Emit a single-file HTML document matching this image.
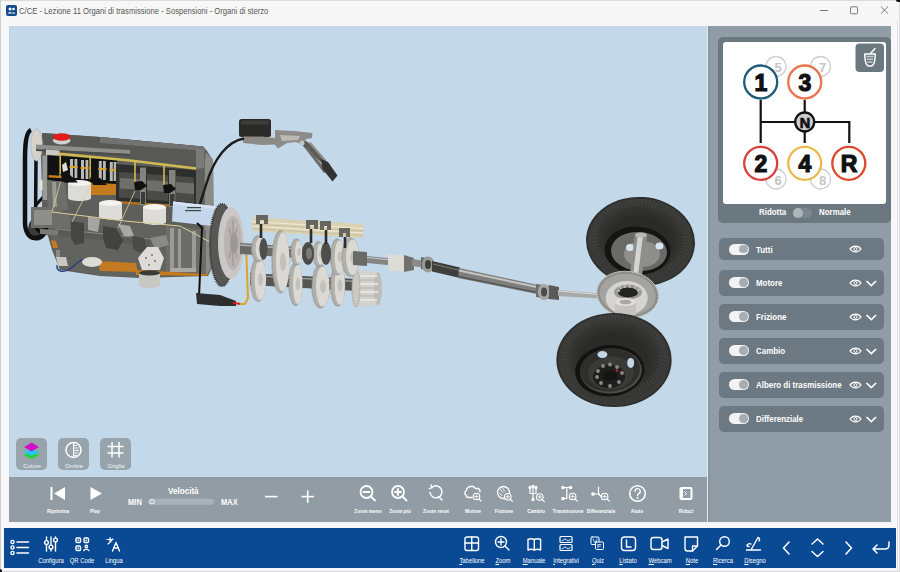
<!DOCTYPE html>
<html><head><meta charset="utf-8">
<style>
*{margin:0;padding:0;box-sizing:border-box}
html,body{width:900px;height:572px;overflow:hidden;background:#f7f7fa;font-family:"Liberation Sans",sans-serif}
.a{position:absolute}
#title{left:0;top:0;width:900px;height:20px;background:#f7f7f7;border-top:1px solid #dcdcdc}
#ttxt{left:19px;top:5.8px;font-size:8.7px;color:#555;white-space:nowrap;transform:scaleX(0.88);transform-origin:0 50%}
#view{left:9px;top:26px;width:698px;height:451px;background:#c3d8e9;border-left:1.5px solid #bdd2e4}
#ctrl{left:9px;top:477px;width:698px;height:45px;background:#919ca4}
#panel{left:707px;top:26px;width:184px;height:495.5px;background:#919da6;border-left:1px solid #e2ebf2;box-shadow:inset 3px 0 2px -1px #8a959d}
#bbar{left:4px;top:528px;width:892px;height:39.5px;background:#0a4a95}
.card{background:#6c7880;border-radius:5px}
.row{left:719px;width:165px;height:26px;background:#6d7982;border-radius:5px}
.tog{left:9.5px;top:8px;width:20.5px;height:11px;border-radius:5.5px;background:#f2f2f2}
.tog:after{content:"";position:absolute;right:1.2px;top:1.2px;width:8.6px;height:8.6px;border-radius:4.3px;background:#a6aeb4}
.rl{left:37px;top:7px;font-size:9.8px;font-weight:bold;color:#fff;white-space:nowrap;transform:scaleX(0.81);transform-origin:0 50%}
.lbl{font-size:5.6px;font-weight:bold;color:#fff;white-space:nowrap;transform:translateX(-50%) scaleX(0.86)}
.blbl{font-size:6.6px;color:#fff;white-space:nowrap;transform:translateX(-50%);text-decoration:underline;text-underline-offset:1px}
.btn{top:438px;width:31px;height:32px;border-radius:5px;background:#98a4ac}
</style></head><body>
<div id="title" class="a"></div>

<div id="ttxt" class="a">C/CE - Lezione 11 Organi di trasmissione - Sospensioni - Organi di sterzo</div>

<div id="view" class="a"></div>
<!--SCENE-->
<svg class="a" id="scene" style="left:9px;top:26px" width="698" height="451" viewBox="9 26 698 451">
<defs>
 <radialGradient id="tire" cx="50%" cy="50%" r="50%"><stop offset="0.55" stop-color="#2a2a28"/><stop offset="0.8" stop-color="#353533"/><stop offset="0.95" stop-color="#3a3a38"/><stop offset="1" stop-color="#262624"/></radialGradient>
 <linearGradient id="shaft" x1="0" y1="0" x2="0" y2="1"><stop offset="0" stop-color="#d0d0d0"/><stop offset="0.5" stop-color="#8a8a8a"/><stop offset="1" stop-color="#5a5a5a"/></linearGradient>
 <linearGradient id="gear" x1="0" y1="0" x2="1" y2="0"><stop offset="0" stop-color="#f0efea"/><stop offset="1" stop-color="#b8b8b4"/></linearGradient>
</defs>
<!-- ===== pedal + ECU ===== -->
<rect x="239" y="119" width="32" height="18" rx="2.5" fill="#2a2a29"/>
<rect x="241" y="120.5" width="28" height="4" rx="1" fill="#3c3c3b"/>
<path d="M243 136.5L262 136.5L275 138L276 144.5L262 145L243 143Z" fill="#8c8a86"/>
<path d="M275 130L294 131L312.5 133L312 138L306 139L305 145.5L296 142L287 143L278 148.5L275 145Z" fill="#8e8c88"/>
<path d="M280 135L300 136L298 140L282 141Z" fill="#bcbab5"/>
<path d="M302 141L307 141.5L328 163L325 166L303 146Z" fill="#5e5c59"/><path d="M304 147L308 148L327 171L324 173Z" fill="#6e6c68"/><path d="M308 142L311 142.5L326 160L324 161Z" fill="#8e8c88"/>
<path d="M321 159L328 162L337.5 175.5L332.5 181.5L322.5 169Z" fill="#333332"/>
<circle cx="302" cy="143" r="2.5" fill="#c8c6c2"/>
<!-- ===== engine block ===== -->
<path d="M42 133L100 137L203 146.5L207 151L213 160L214 264L208 276L140 278L100 276L60 270L52 250L48 236L44 232L42 207L42 195L41 155Z" fill="#5e5e5b"/>
<!-- ===== belt ===== -->
<ellipse cx="37" cy="229" rx="9" ry="11.5" fill="#3a3a39"/>
<path d="M31 130C26 132 25 145 25 160L25 222C25 232 29 238 35 238C42 238 46 233 46 228" fill="none" stroke="#101010" stroke-width="4.5"/>
<path d="M36 160L35.5 222C35.5 230 40 234 45 230" fill="none" stroke="#101010" stroke-width="3.5"/><path d="M36 205L45 195" fill="none" stroke="#101010" stroke-width="3"/>
<ellipse cx="36.7" cy="145" rx="5.8" ry="16" fill="#d6d2ca"/>
<ellipse cx="36.7" cy="145" rx="5.8" ry="16" fill="none" stroke="#a8a49c" stroke-width="1" stroke-dasharray="0.7 0.7"/>

<!-- head cover -->
<path d="M42 133L100 137L203 146.5L207 151L206 158L195 167L100 158L45 154Z" fill="#585854"/>
<path d="M100 137L203 146.5L207 151L100 143Z" fill="#727270"/>
<ellipse cx="61.7" cy="140.5" rx="8.8" ry="4" fill="#cdd0d0"/>
<ellipse cx="61.7" cy="137" rx="8.8" ry="3.8" fill="#e01c1c"/>
<!-- right face -->
<path d="M206 152L213 160L214 264L207 275L204 268L205 160Z" fill="#8a8a86"/>
<!-- camshaft rail -->
<path d="M36 144.5L130 150L130 154L36 149Z" fill="#8e8e8a"/>
<path d="M36 149L130 154L130 156L36 151Z" fill="#4a4a48"/>
<!-- left box & pulley -->
<path d="M46 149.5L59.6 150.5L59.6 157L46 156.5Z" fill="#cacac6"/>
<ellipse cx="44" cy="185" rx="5" ry="6" fill="#e2e2de"/>
<!-- black opening under head (left) -->
<path d="M47 155L117 160L117 186L92 186L65 182L47 180Z" fill="#121212"/>
<path d="M42.4 155.6L47.3 155.6L47.3 200L42.4 200Z" fill="#9a9a96"/>
<g fill="#b9b9b5"><rect x="70" y="159" width="3" height="19"/><rect x="74.5" y="159" width="2.8" height="19"/><rect x="81" y="160" width="3" height="19"/><rect x="85.5" y="160" width="2.8" height="19"/><rect x="98.8" y="161" width="3" height="19"/><rect x="103" y="161" width="2.8" height="19"/><rect x="109.8" y="162" width="3" height="19"/><rect x="113.7" y="162" width="2.8" height="19"/></g>
<g fill="#d9a52c"><rect x="69.5" y="166" width="8" height="2"/><rect x="80.5" y="167" width="8" height="2"/><rect x="98.5" y="168" width="8" height="2"/><rect x="109.5" y="169" width="8" height="2"/></g>
<path d="M62 165L66 162L68 170L63 172Z" fill="#dcdcd8"/>
<!-- left vertical columns -->
<path d="M47 180L65 182L68 210L50 212L47 200Z" fill="#6e6e6b"/>
<path d="M52 182L56 182L57 208L53 208Z" fill="#9a9a96"/>
<!-- orange pieces -->
<path d="M48.6 175L64.5 176L64.5 178.3L48.6 177.5Z" fill="#c47a1e"/>
<path d="M89 182.5L117 184L117 195L89 195Z" fill="#c47a1e"/>
<!-- cylinders right (dark) -->
<path d="M116 164L196 170L196 206L116 201Z" fill="#2e2e2c"/>
<path d="M119 172L143 173.5L143 199L119 197.5Z" fill="#4a4a48"/><path d="M120 178L143 179.5L143 190L120 188.5Z" fill="#6e6e6a"/>
<path d="M147 174L168 175.5L168 201L147 199.5Z" fill="#4a4a48"/><path d="M147 180L168 181.5L168 192L147 190.5Z" fill="#6e6e6a"/>
<path d="M176 176L194 177.5L194 203L176 201.5Z" fill="#4a4a48"/><path d="M176 182L194 183.5L194 194L176 192.5Z" fill="#6e6e6a"/>
<path d="M116 201L196 206L196 208L116 203.5Z" fill="#b06d20"/>
<g fill="#8c8c88" opacity="0.9"><rect x="140" y="167.5" width="6" height="38"/><rect x="169" y="170" width="6.5" height="37"/></g>
<g fill="#3a3a38"><rect x="141" y="192" width="4" height="12"/><rect x="170" y="194" width="4.5" height="12"/></g>
<path d="M196 148L204.4 150L204.4 168L196 169Z" fill="#7a7a76"/>
<!-- fuel rail yellow -->
<path d="M59 153.8L130 160.5L196 168.5" fill="none" stroke="#d0bb52" stroke-width="2.6"/>
<path d="M60.2 153.8V176.4M90.2 156.6V179M135 161.5V184M164 164.5V187" fill="none" stroke="#d0bb52" stroke-width="1.6"/>
<!-- pistons -->
<path d="M68 183L91 183L91 198C91 202 68 202 68 198Z" fill="#dcdbd6"/>
<ellipse cx="79.5" cy="183" rx="11.5" ry="3" fill="#f2f2ef"/>
<path d="M99 203L122 203L122 218C122 222 99 222 99 218Z" fill="#dddcd7"/>
<ellipse cx="110.5" cy="203" rx="11.5" ry="3" fill="#f2f2ef"/>
<path d="M143 207L166 207L166 222C166 226 143 226 143 222Z" fill="#dddcd7"/>
<ellipse cx="154.5" cy="207" rx="11.5" ry="3" fill="#f2f2ef"/>
<!-- injectors -->
<g fill="#111"><path d="M60 174L70 175L78 182.5L64 182.5Z"/><path d="M90 177.6L100 178L107 185L93 185Z"/><path d="M134 182L142 181L147 186L141 190L135 190Z"/><path d="M163 185L171 184L176 189L170 193L164 193Z"/></g>
<!-- crankshaft -->
<path d="M47 212L130 222L175 228L205 232L206 272L140 277L100 275L60 269L52 243Z" fill="#62625f"/>
<path d="M166 225L206 230L206 273L166 272Z" fill="#6c6c69"/>
<g fill="#9a9a96"><rect x="170" y="228" width="4" height="44"/><rect x="178" y="229" width="3" height="43"/><rect x="192" y="231" width="4" height="41"/></g>
<path d="M170 268L196 268L196 272L170 272Z" fill="#a8a8a4"/>
<path d="M31 207L58 207L62 214L70 214L70 233L58 233L55 228L31 228Z" fill="#6d6d6a"/>
<path d="M34 210L52 210L52 225L34 225Z" fill="#8e8e8a"/>
<path d="M40 229L72 231L72 236L40 234Z" fill="#7a7a77"/>
<path d="M58 228L100 231L130 236L150 238L150 246L128 244L100 240L58 236Z" fill="#5a5a57"/>
<path d="M58 229L150 239" stroke="#8a8a86" stroke-width="1.2"/>
<path d="M71 221L84 223L84 243L75 245L71 238Z" fill="#454543"/>
<path d="M88 216L100 219L98 232L88 230Z" fill="#a5a5a1"/>
<path d="M103 226L116 228L123 240L118 250L106 248L103 238Z" fill="#42423f"/>
<path d="M118 224L130 226L134 236L124 236Z" fill="#a8a8a4"/>
<path d="M132 236L144 238L147 249L140 253L133 249Z" fill="#4a4a48"/>
<path d="M150 238L166 235L169 245L155 249Z" fill="#8a8a86"/>
<path d="M52 212L125 221L180 226L212 243" fill="none" stroke="#d9d19c" stroke-width="1"/>
<path d="M60.5 182L52 212M90 186L72 222M135 191L118 228" stroke="#d9d19c" stroke-width="0.8"/>
<!-- orange bottom -->
<path d="M51 240L56 241L58 248L53 248Z" fill="#c47a1e"/>
<path d="M98 261L136 263L138 272L100 271Z" fill="#c47a1e"/>
<path d="M136 270L208 274L206 276L136 275Z" fill="#c47a1e"/>
<!-- distributor -->
<path d="M138 258L147 247L158 247L164 258L160 270L142 270Z" fill="#dedcd8"/>
<g fill="#6a6a68"><circle cx="146" cy="258" r="0.9"/><circle cx="152" cy="255" r="0.9"/><circle cx="155" cy="261" r="0.9"/><circle cx="149" cy="265" r="0.9"/></g>
<path d="M139 273L160 273L160 285C160 289 139 289 139 285Z" fill="#c8c7c2"/>
<ellipse cx="149.5" cy="273" rx="10.5" ry="2.5" fill="#3a3a38"/>
<!-- small parts bottom-left -->
<path d="M56 250L60 250L60 258L56 258Z" fill="#8a8a86"/>
<path d="M56 257L66 257L68 266L58 266Z" fill="#c8c7c2"/>
<path d="M57 265C56 272 64 273 70 269C74 266 78 261 84 259" fill="none" stroke="#1f3b80" stroke-width="1.3"/>
<ellipse cx="92" cy="262" rx="10" ry="5" fill="#dcdbd6"/>
<path d="M244 138.5C228 141 214 158 206 185C203 195 201 200 200 204" fill="none" stroke="#1c1c1c" stroke-width="2.4"/>
<!-- blue ECU -->
<path d="M173 201.5L218 206.5L216 226.5L172 221.5Z" fill="#c3d6ec"/>
<path d="M173 201.5L218 206.5L218 209L173 204Z" fill="#d8e6f4"/>
<g fill="#444"><rect x="187" y="207" width="14" height="1.2"/><rect x="185" y="210" width="16" height="1.2"/></g>
<!-- cable from ECU down -->
<path d="M197 223L202 228L199 297" fill="none" stroke="#111" stroke-width="2"/>
<path d="M196 293L220 295L236 301L236 306L220 306L197 304Z" fill="#2e2e2e"/>
<path d="M233 303L241 304" stroke="#d82020" stroke-width="2.2"/>
<!-- ===== flywheel / clutch ===== -->
<ellipse cx="222" cy="245" rx="12" ry="41" fill="#575755"/>
<ellipse cx="222" cy="245" rx="12" ry="41" fill="none" stroke="#3a3a38" stroke-width="2.2" stroke-dasharray="1.2 0.8"/>
<ellipse cx="231" cy="243" rx="13" ry="36" fill="#cbc7c6"/>
<ellipse cx="233" cy="243" rx="9" ry="27" fill="#b9b3b3"/>
<path d="M233 220L233 266M229 228L237 258M237 228L229 258" stroke="#8a8686" stroke-width="0.8"/>
<ellipse cx="234" cy="243" rx="4" ry="10" fill="#9c9898"/>
<path d="M240 243.5L246 246L248 298L245 304L240 304" fill="none" stroke="#d9a52c" stroke-width="2"/>
<!-- ===== gearbox ===== -->
<path d="M240 243L356 251L356 262L240 254Z" fill="#6a6a68"/><path d="M240 245L356 253" stroke="#b5b5b2" stroke-width="1.5"/>
<path d="M250 273L357 279L357 291L250 285Z" fill="#545452"/><path d="M250 275.5L357 281.5" stroke="#9a9a98" stroke-width="1.5"/>
<path d="M252 217L363 224L363 238L252 231Z" fill="#d9d1b2"/>
<path d="M252 221.5L363 228.5" stroke="#f2ecd6" stroke-width="1"/><path d="M252 226L363 233" stroke="#f2ecd6" stroke-width="1"/><path d="M252 224L363 231M252 228.5L363 235.5" stroke="#bdb596" stroke-width="0.6"/>
<ellipse cx="258.1" cy="279.6" rx="7.5" ry="21.7" fill="#b1b0aa" stroke="#8f8e89" stroke-width="1.4" stroke-dasharray="0.6 0.6"/><ellipse cx="260.3" cy="279.6" rx="5.7" ry="20.2" fill="#dad9d3"/><ellipse cx="260.6" cy="279.6" rx="2.6" ry="6.5" fill="#c2c1bb"/>
<ellipse cx="295.5" cy="284.2" rx="6.5" ry="21.2" fill="#b1b0aa" stroke="#8f8e89" stroke-width="1.4" stroke-dasharray="0.6 0.6"/><ellipse cx="297.7" cy="284.2" rx="4.7" ry="19.8" fill="#dad9d3"/><ellipse cx="298.0" cy="284.2" rx="2.3" ry="6.4" fill="#c2c1bb"/>
<ellipse cx="320.5" cy="286.5" rx="8.5" ry="21.5" fill="#b1b0aa" stroke="#8f8e89" stroke-width="1.4" stroke-dasharray="0.6 0.6"/><ellipse cx="322.7" cy="286.5" rx="6.7" ry="20.0" fill="#dad9d3"/><ellipse cx="323.0" cy="286.5" rx="3.0" ry="6.5" fill="#c2c1bb"/>
<ellipse cx="337.6" cy="285.5" rx="7.0" ry="20.5" fill="#b1b0aa" stroke="#8f8e89" stroke-width="1.4" stroke-dasharray="0.6 0.6"/><ellipse cx="339.8" cy="285.5" rx="5.2" ry="19.0" fill="#dad9d3"/><ellipse cx="340.1" cy="285.5" rx="2.5" ry="6.1" fill="#c2c1bb"/>
<path d="M356 270L378 272L380 305L356 307Z" fill="#d2d1cb"/><ellipse cx="378" cy="288.5" rx="4" ry="16.5" fill="#bebdb7"/><ellipse cx="356" cy="288.5" rx="4" ry="18" fill="#c9c8c2" stroke="#a09f99" stroke-width="1.2" stroke-dasharray="0.8 0.8"/>
<path d="M360 276H377M360 284H378M360 292H378M360 300H377" stroke="#ecebe6" stroke-width="1.3"/><path d="M360 280H378M360 288H378M360 296H378" stroke="#b0afa9" stroke-width="0.8"/>
<ellipse cx="258.6" cy="248.6" rx="7.1" ry="12.9" fill="#b1b0aa" stroke="#8f8e89" stroke-width="1.4" stroke-dasharray="0.6 0.6"/><ellipse cx="260.8" cy="248.6" rx="5.3" ry="11.4" fill="#dad9d3"/><ellipse cx="261.1" cy="248.6" rx="2.5" ry="3.9" fill="#c2c1bb"/>
<ellipse cx="280.5" cy="261.9" rx="8.5" ry="31.1" fill="#b1b0aa" stroke="#8f8e89" stroke-width="1.4" stroke-dasharray="0.6 0.6"/><ellipse cx="282.7" cy="261.9" rx="6.7" ry="29.6" fill="#dad9d3"/><ellipse cx="283.0" cy="261.9" rx="3.0" ry="9.3" fill="#c2c1bb"/>
<ellipse cx="296.5" cy="252.0" rx="5.5" ry="13.0" fill="#b1b0aa" stroke="#8f8e89" stroke-width="1.4" stroke-dasharray="0.6 0.6"/><ellipse cx="298.7" cy="252.0" rx="3.7" ry="11.5" fill="#dad9d3"/><ellipse cx="299.0" cy="252.0" rx="1.9" ry="3.9" fill="#c2c1bb"/>
<ellipse cx="318.4" cy="254.0" rx="5.3" ry="12.5" fill="#b1b0aa" stroke="#8f8e89" stroke-width="1.4" stroke-dasharray="0.6 0.6"/><ellipse cx="320.6" cy="254.0" rx="3.5" ry="11.0" fill="#dad9d3"/><ellipse cx="320.9" cy="254.0" rx="1.9" ry="3.8" fill="#c2c1bb"/>
<ellipse cx="337.3" cy="257.0" rx="6.7" ry="18.0" fill="#b1b0aa" stroke="#8f8e89" stroke-width="1.4" stroke-dasharray="0.6 0.6"/><ellipse cx="339.5" cy="257.0" rx="4.9" ry="16.5" fill="#dad9d3"/><ellipse cx="339.8" cy="257.0" rx="2.3" ry="5.4" fill="#c2c1bb"/>
<ellipse cx="350.5" cy="257.2" rx="8.5" ry="19.2" fill="#b1b0aa" stroke="#8f8e89" stroke-width="1.4" stroke-dasharray="0.6 0.6"/><ellipse cx="352.7" cy="257.2" rx="6.7" ry="17.7" fill="#dad9d3"/><ellipse cx="353.0" cy="257.2" rx="3.0" ry="5.8" fill="#c2c1bb"/>
<ellipse cx="263.5" cy="249" rx="4" ry="11" fill="#4e4e4c"/><ellipse cx="308" cy="253.5" rx="6" ry="11.5" fill="#4a4a48"/><ellipse cx="309" cy="253.5" rx="3" ry="6" fill="#7a7a78"/><ellipse cx="326" cy="253.5" rx="5" ry="11.5" fill="#4e4e4c"/>
<g fill="#66665f"><path d="M256 215H268V224H264V220H260V224H256Z"/><path d="M306 220H318V229H314V225H310V229H306Z"/><path d="M320 221H331V230H327V226H324V230H320Z"/><path d="M339 228H350V237H346V233H343V237H339Z"/></g>
<g stroke="#2c2c2b" stroke-width="2.6"><path d="M261 224V238M311 229V243M326 230V244M345 237V248"/></g>
<path d="M353 251L367 252L367 266L353 265Z" fill="#6a6a68"/><path d="M367 256L392 258.5L392 265.5L367 263Z" fill="#858583"/><path d="M367 257.5L392 260" stroke="#c8c8c6" stroke-width="1.2"/>
<path d="M388 254L404 255L414 258L414 270L404 272L388 270Z" fill="#dcdbd6"/><path d="M404 255L414 258L414 270L404 272Z" fill="#707070"/>
<!-- ===== drive shaft ===== -->
<path d="M412 259L426 261L426 268L412 266Z" fill="#8a8a88"/>
<path d="M421 257L433 259L434 271L421 269Z" fill="#6a6a68"/>
<ellipse cx="428" cy="264.5" rx="6" ry="8" fill="#9a9a98"/>
<ellipse cx="428" cy="264.5" rx="3" ry="4.5" fill="#3e3e3c"/>
<path d="M432 261L460 267.5L460 278L432 271.5Z" fill="#3e3e3c"/>
<path d="M433 264L460 270.5" stroke="#7a7a78" stroke-width="1"/>
<path d="M459 268L538 285L537 294L458 278Z" fill="#7e7e7c"/>
<path d="M459 270.5L538 287.3" stroke="#c4c4c2" stroke-width="2"/>
<path d="M458 276.5L537 292.5" stroke="#545452" stroke-width="1.4"/>
<path d="M536 284L550 286L550 299L536 297Z" fill="#6e6e6c"/>
<ellipse cx="544" cy="292" rx="6" ry="8" fill="#a6a6a4"/>
<ellipse cx="544" cy="292" rx="3" ry="4.5" fill="#4a4a48"/>
<path d="M549 285L559 287L559 300L549 299Z" fill="#5a5a58"/>
<path d="M558 290L600 293.5L600 298.5L558 296Z" fill="#a8a8a6"/>
<path d="M558 291L600 294.5" stroke="#d8d8d6" stroke-width="1"/>
<!-- ===== top wheel ===== -->
<ellipse cx="640.5" cy="241.5" rx="54.5" ry="44.5" fill="url(#tire)" transform="rotate(4 640.5 241.5)"/>
<ellipse cx="640" cy="239" rx="46" ry="36" fill="none" stroke="#4a4a47" stroke-width="7" stroke-dasharray="1.5 2" opacity="0.45" transform="rotate(4 640.5 241.5)"/>
<ellipse cx="637.5" cy="250.6" rx="33" ry="24" fill="#141413" transform="rotate(4 637.5 250.6)"/>
<ellipse cx="639" cy="251.5" rx="28" ry="19.5" fill="#6a6a67" transform="rotate(4 639 251.5)"/>
<ellipse cx="642" cy="254" rx="18" ry="13" fill="#8e8e8b"/>
<ellipse cx="630" cy="247.5" rx="4" ry="3.5" fill="#d8e4ee"/>
<ellipse cx="659.5" cy="246" rx="4" ry="3.5" fill="#d8e4ee"/>
<path d="M635 234L647 235.5L639 300L627 299Z" fill="#8e8e8b"/>
<path d="M638 234.5L643 235L635 300L630 300Z" fill="#d4d4d1"/>
<ellipse cx="641" cy="235" rx="6" ry="2.5" fill="#b8b8b5"/>
<!-- ===== differential ===== -->
<ellipse cx="627.7" cy="294.4" rx="31" ry="23" fill="#a3a3a1" transform="rotate(8 627.7 294.4)"/>
<ellipse cx="627.7" cy="294.4" rx="29.5" ry="21.8" fill="none" stroke="#7a7a78" stroke-width="3" stroke-dasharray="0.8 0.8" transform="rotate(8 627.7 294.4)"/>
<ellipse cx="627.7" cy="294.4" rx="31" ry="23" fill="none" stroke="#c9c9c7" stroke-width="0.8" transform="rotate(8 627.7 294.4)"/>
<ellipse cx="626.7" cy="298" rx="21" ry="17" fill="#d6d4ce"/>
<ellipse cx="628" cy="292" rx="14" ry="7.5" fill="#9a9a96"/>
<ellipse cx="628" cy="292.5" rx="10" ry="5" fill="#232322"/>
<g stroke="#bcbcb8" stroke-width="1.6"><path d="M617 290L620 291.5M619 286.5L621.5 289M624 285L625 288M630 284.8L630 288M636 286L634.5 289M640 289L637 291"/></g>
<path d="M615 302L636 302L636 314C636 317 615 317 615 314Z" fill="#c4c3bf"/>
<ellipse cx="625.5" cy="302" rx="10.5" ry="4" fill="#e0dfdb"/>
<ellipse cx="625.5" cy="302" rx="6" ry="2.3" fill="#a8a7a3"/>
<!-- ===== bottom wheel ===== -->
<ellipse cx="614" cy="360" rx="57.6" ry="47" fill="url(#tire)"/>
<ellipse cx="614" cy="356" rx="49" ry="38" fill="none" stroke="#4a4a47" stroke-width="7" stroke-dasharray="1.5 2" opacity="0.45"/>
<ellipse cx="609.7" cy="370.7" rx="34.6" ry="25.7" fill="#121211" transform="rotate(-4 609.7 370.7)"/>
<ellipse cx="611" cy="371" rx="31" ry="22.5" fill="#4a4a48" transform="rotate(-4 611 371)"/>
<ellipse cx="610" cy="370" rx="30" ry="21.5" fill="#2e2e2c" transform="rotate(-4 610 370)"/>
<ellipse cx="611" cy="373" rx="23" ry="16.5" fill="#3a3a38" transform="rotate(-4 611 373)"/>
<ellipse cx="602.4" cy="354.5" rx="5" ry="3.5" fill="#c3d6e6"/>
<ellipse cx="630.7" cy="362.9" rx="3.5" ry="5" fill="#c3d6e6"/>
<ellipse cx="609" cy="376.5" rx="16" ry="11.5" fill="#1e1e1d"/>
<ellipse cx="610" cy="376" rx="7" ry="5" fill="#141414"/>
<g fill="#8a8a88"><circle cx="598" cy="371" r="1.9"/><circle cx="603" cy="366" r="1.9"/><circle cx="610" cy="364.5" r="1.9"/><circle cx="617" cy="367" r="1.9"/><circle cx="622" cy="373" r="1.9"/><circle cx="619" cy="382" r="1.9"/><circle cx="610" cy="386" r="1.9"/><circle cx="601" cy="383" r="1.9"/><circle cx="597" cy="377" r="1.9"/></g>
<circle cx="617" cy="370.5" r="1.3" fill="#c02020"/>
</svg>

<!--/SCENE-->
<div id="ctrl" class="a"></div>
<div id="panel" class="a"></div>
<div id="bbar" class="a"></div>

<svg class="a" style="left:4px;top:528px" width="892" height="40" viewBox="4 528 892 40">
 <g fill="none" stroke="#fff" stroke-width="1.4" stroke-linecap="round" stroke-linejoin="round">
  <circle cx="12.5" cy="542" r="1.6"/><circle cx="12.5" cy="547.5" r="1.6"/><circle cx="12.5" cy="553" r="1.6"/>
  <path d="M17 542H28.5M17 547.5H28.5M17 553H28.5" stroke-width="1.5"/>
  <path d="M46.5 537V551M51 537V551M55.5 537V551"/>
  <circle cx="46.5" cy="542.5" r="1.9" fill="#0a4a95"/><circle cx="51" cy="547" r="1.9" fill="#0a4a95"/><circle cx="55.5" cy="540" r="1.9" fill="#0a4a95"/>
  <rect x="76" y="538" width="4.5" height="4.5" rx="1"/><rect x="84" y="538" width="4.5" height="4.5" rx="1"/><rect x="76" y="546" width="4.5" height="4.5" rx="1"/><path d="M78.2 540.2h.1M86.2 540.2h.1M78.2 548.2h.1" stroke-width="1.6"/>
  <circle cx="86.3" cy="546.5" r="1.2"/><path d="M83.8 550.5Q86.3 547.8 88.8 550.5"/>
  <path d="M107 539.5H113M110 537.5V541.5M108 544Q111 542 112.5 539" stroke-width="1.2"/>
  <path d="M112.5 551L116 542.5L119.5 551M113.8 548H118.2" stroke-width="1.4"/>
  <rect x="465" y="537" width="13.5" height="13.5" rx="2"/><path d="M465 543H478.5M471.75 537V550.5"/>
  <circle cx="501" cy="542" r="5.5"/><path d="M505 546L509 550M498 542H504M501 539V545"/>
  <path d="M528 539.5Q531 538 534.3 539.5V550Q531 548.5 528 550ZM534.3 539.5Q537.6 538 540.6 539.5V550Q537.6 548.5 534.3 550Z"/>
  <rect x="560" y="536.5" width="12" height="6" rx="1" stroke-width="1.2"/><rect x="560" y="544.5" width="12" height="6" rx="1" stroke-width="1.2"/>
  <path d="M562 541L565 538.8L568 541L570 539.5M562 549L565 546.8L568 549L570 547.5" stroke-width="0.9"/>
  <rect x="591" y="537" width="8" height="7.5" rx="1" stroke-width="1"/><rect x="595.5" y="542" width="8" height="7.5" rx="1" stroke-width="1" fill="#0a4a95"/><path d="M593 539L595 543L597 539M598 544.5V548M598 544.5H601M598 546.3H600.5" stroke-width="0.7"/>
  <rect x="621.5" y="537" width="14" height="13.5" rx="3"/><path d="M626.5 540V547H631"/>
  <rect x="651" y="537.5" width="11" height="12" rx="2.5"/><path d="M662 542L668 539V548.5L662 545.5"/>
  <path d="M685 537H697.5V546L692.5 551H687.5Q685 551 685 548.5Z"/><path d="M697.5 546H692.5V551"/>
  <circle cx="724.5" cy="541.5" r="4.8"/><path d="M721 545L716.5 549.5"/>
  <path d="M758 537.5L751.5 549M751 544Q749.5 543 747.5 544.5Q746 546.5 749 546.5M746.5 550H760.5M758 537.5Q760.5 538.5 759 541"/>
  <path d="M789 542L783.5 548L789 554" stroke-width="1.5"/>
  <path d="M812 544L817.5 539L823 544M812 551.5L817.5 556.5L823 551.5" stroke-width="1.5"/>
  <path d="M846 542L851.5 548L846 554" stroke-width="1.5"/>
  <path d="M889 542V545Q889 549 885 549H873M877 545L873 549L877 553" stroke-width="1.5"/>
 </g>
</svg>
<div class="a lbl" style="left:50.8px;top:556.5px;font-size:6.4px;font-weight:normal;transform:translateX(-50%) scaleX(0.92)">Configura</div>
<div class="a lbl" style="left:82px;top:556.5px;font-size:6.4px;font-weight:normal;transform:translateX(-50%) scaleX(0.92)">QR Code</div>
<div class="a lbl" style="left:114px;top:556.5px;font-size:6.4px;font-weight:normal;transform:translateX(-50%) scaleX(0.92)">Lingua</div>
<div class="a lbl" style="left:471.7px;top:556.5px;font-size:6.4px;font-weight:normal;transform:translateX(-50%) scaleX(0.92)"><u style="text-decoration-thickness:0.5px;text-underline-offset:1px">T</u>abellone</div>
<div class="a lbl" style="left:503px;top:556.5px;font-size:6.4px;font-weight:normal;transform:translateX(-50%) scaleX(0.92)"><u style="text-decoration-thickness:0.5px;text-underline-offset:1px">Z</u>oom</div>
<div class="a lbl" style="left:534.3px;top:556.5px;font-size:6.4px;font-weight:normal;transform:translateX(-50%) scaleX(0.92)"><u style="text-decoration-thickness:0.5px;text-underline-offset:1px">M</u>anuale</div>
<div class="a lbl" style="left:565.8px;top:556.5px;font-size:6.4px;font-weight:normal;transform:translateX(-50%) scaleX(0.92)"><u style="text-decoration-thickness:0.5px;text-underline-offset:1px">I</u>ntegrativi</div>
<div class="a lbl" style="left:597.5px;top:556.5px;font-size:6.4px;font-weight:normal;transform:translateX(-50%) scaleX(0.92)"><u style="text-decoration-thickness:0.5px;text-underline-offset:1px">Q</u>uiz</div>
<div class="a lbl" style="left:628.4px;top:556.5px;font-size:6.4px;font-weight:normal;transform:translateX(-50%) scaleX(0.92)"><u style="text-decoration-thickness:0.5px;text-underline-offset:1px">L</u>istato</div>
<div class="a lbl" style="left:660px;top:556.5px;font-size:6.4px;font-weight:normal;transform:translateX(-50%) scaleX(0.92)"><u style="text-decoration-thickness:0.5px;text-underline-offset:1px">W</u>ebcam</div>
<div class="a lbl" style="left:691.5px;top:556.5px;font-size:6.4px;font-weight:normal;transform:translateX(-50%) scaleX(0.92)"><u style="text-decoration-thickness:0.5px;text-underline-offset:1px">N</u>ote</div>
<div class="a lbl" style="left:722.8px;top:556.5px;font-size:6.4px;font-weight:normal;transform:translateX(-50%) scaleX(0.92)"><u style="text-decoration-thickness:0.5px;text-underline-offset:1px">R</u>icerca</div>
<div class="a lbl" style="left:754.6px;top:556.5px;font-size:6.4px;font-weight:normal;transform:translateX(-50%) scaleX(0.92)"><u style="text-decoration-thickness:0.5px;text-underline-offset:1px">D</u>isegno</div>

<svg class="a" style="left:800px;top:0px" width="100" height="21" viewBox="800 0 100 21">
 <path d="M820 10.5H828" stroke="#6a6a6a" stroke-width="0.9"/>
 <rect x="850.5" y="6.8" width="7" height="7" rx="1" fill="none" stroke="#6a6a6a" stroke-width="0.9"/>
 <path d="M880.8 6.5L888 13.7M888 6.5L880.8 13.7" stroke="#6a6a6a" stroke-width="0.9"/>
</svg>
<svg class="a" style="left:6px;top:5px" width="11" height="11" viewBox="0 0 11 11">
 <rect width="11" height="11" rx="2" fill="#124a8c"/>
 <circle cx="4" cy="4" r="1.5" fill="#fff"/><circle cx="7.5" cy="4" r="1.3" fill="#fff"/>
 <path d="M1.5 8.5Q4 5.5 6.5 8.5ZM6 8.5Q7.5 6 9.5 8.5Z" fill="#fff"/>
</svg>


<svg class="a" style="left:9px;top:477px" width="698" height="45" viewBox="9 477 698 45">
 <g fill="#fff">
  <rect x="50.5" y="487" width="2" height="13"/>
  <path d="M54 493.5L65 487V500Z"/>
  <path d="M90.5 487L102 493.5L90.5 500Z"/>
  <rect x="265" y="495.8" width="12.5" height="1.6"/>
  <rect x="301.5" y="495.8" width="12.5" height="1.6"/>
  <rect x="306.9" y="490.5" width="1.6" height="12.5"/>
 </g>
 <rect x="148" y="498.7" width="66" height="6" rx="3" fill="#a9b2b8"/>
 <circle cx="152" cy="501.7" r="2.3" fill="#aab3b9" stroke="#fff" stroke-width="0.9"/>
 <g fill="none" stroke="#fff" stroke-width="1.5" stroke-linecap="round">
  <g stroke-width="1.8"><circle cx="366.5" cy="492" r="6"/><path d="M371 496.5L375 500.5M363.5 492H369.5"/>
  <circle cx="398" cy="492" r="6"/><path d="M402.5 496.5L406.5 500.5M395 492H401M398 489V495"/></g>
  <path d="M432 487.3A6 6 0 1 1 430 492.5"/><path d="M431 485L432 487.6L429.3 488.6"/><path d="M438.5 496.5L442 500"/>
  <path d="M466.5 489L469.5 486.5H473.5L475.5 488.5H478.5L480 490.5V492M466.5 489V490.5L465 491.5V494.5L466.5 495.5V497L469 497.5H472" stroke-width="1.3"/>
<circle cx="476.5" cy="496.5" r="3.3" stroke-width="1.1" fill="#919ca4"/><path d="M478.9 498.9L481.1 501.1" stroke-width="1.2"/><path d="M474.9 496.5H478.1M476.5 494.9V498.1" stroke-width="0.9"/>
<circle cx="503.5" cy="492.5" r="6" stroke-width="1.3"/><path d="M500.5 489.5L503 492.5M499.5 493.5L502 495.5M503 488.5L504.5 491" stroke-width="0.9"/>
<circle cx="507.8" cy="496.8" r="3.3" stroke-width="1.1" fill="#919ca4"/><path d="M510.2 499.2L512.4 501.40000000000003" stroke-width="1.2"/><path d="M506.2 496.8H509.40000000000003M507.8 495.2V498.40000000000003" stroke-width="0.9"/>
<path d="M530 488.5V493.5M533 487.5V499M536 488.5V493.5M530 493.5H536" stroke-width="1.2"/><circle cx="530" cy="487.5" r="0.9"/><circle cx="533" cy="486.5" r="0.9"/><circle cx="536" cy="487.5" r="0.9"/><circle cx="533" cy="499.5" r="0.9"/>
<circle cx="539.7" cy="497" r="3.3" stroke-width="1.1" fill="#919ca4"/><path d="M542.1 499.4L544.3000000000001 501.6" stroke-width="1.2"/><path d="M538.1 497H541.3000000000001M539.7 495.4V498.6" stroke-width="0.9"/>
<path d="M563 487.5H570.5M566.8 487.5V498.5M563 498.5H566.8" stroke-width="1.2"/><circle cx="563" cy="487.5" r="1.1"/><circle cx="570.5" cy="487.5" r="1.1"/><circle cx="563" cy="498.5" r="1.1"/>
<circle cx="572.6" cy="496.5" r="3.3" stroke-width="1.1" fill="#919ca4"/><path d="M575.0 498.9L577.2 501.1" stroke-width="1.2"/><path d="M571.0 496.5H574.2M572.6 494.9V498.1" stroke-width="0.9"/>
<path d="M593 494H599.5M598.5 487V494L601.5 497" stroke-width="1.2"/><circle cx="593" cy="494" r="1.1"/>
<circle cx="604.6" cy="496.5" r="3.3" stroke-width="1.1" fill="#919ca4"/><path d="M607.0 498.9L609.2 501.1" stroke-width="1.2"/><path d="M603.0 496.5H606.2M604.6 494.9V498.1" stroke-width="0.9"/>
 <circle cx="637.5" cy="493.5" r="7.8" stroke-width="1.6"/>
  <path d="M635 491.2A2.6 2.6 0 1 1 638.5 493.7C637.7 494.1 637.5 494.6 637.5 495.5" stroke-width="1.4"/>
 </g>
 <circle cx="637.5" cy="498" r="0.9" fill="#fff"/>
 <rect x="679.5" y="487" width="13" height="13" rx="2" fill="#fff"/>
 <rect x="683" y="489" width="7.5" height="9" fill="#919ca4"/>
 <path d="M684.5 491.5L686.5 493.5L684.5 495.5" fill="none" stroke="#fff" stroke-width="1"/>
</svg>
<div class="a" style="left:168px;top:486px;font-size:9px;font-weight:bold;color:#fff;transform:scaleX(0.9);transform-origin:0 50%">Velocità</div>
<div class="a" style="left:127.5px;top:497px;font-size:8.6px;font-weight:bold;color:#fff;transform:scaleX(0.88);transform-origin:0 50%">MIN</div>
<div class="a" style="left:220.5px;top:497px;font-size:8.6px;font-weight:bold;color:#fff;transform:scaleX(0.88);transform-origin:0 50%">MAX</div>
<div class="a lbl" style="left:58.3px;top:508px">Ripristina</div>
<div class="a lbl" style="left:95px;top:508px">Play</div>
<div class="a lbl" style="left:368px;top:508px">Zoom meno</div>
<div class="a lbl" style="left:399.5px;top:508px">Zoom più</div>
<div class="a lbl" style="left:436px;top:508px">Zoom reset</div>
<div class="a lbl" style="left:472.6px;top:508px">Motore</div>
<div class="a lbl" style="left:504px;top:508px">Frizione</div>
<div class="a lbl" style="left:536px;top:508px">Cambio</div>
<div class="a lbl" style="left:568px;top:508px">Trasmissione</div>
<div class="a lbl" style="left:601px;top:508px">Differenziale</div>
<div class="a lbl" style="left:637px;top:508px">Aiuto</div>
<div class="a lbl" style="left:686px;top:508px">Riduci</div>

<div class="a btn" style="left:15.5px"></div><div class="a btn" style="left:57.5px"></div><div class="a btn" style="left:99.5px"></div>
<svg class="a" style="left:15px;top:437px" width="120" height="34" viewBox="15 437 120 34">
 <path d="M24 455L31.5 451L39 455L31.5 459Z" fill="#1fd62a"/>
 <path d="M24 452L31.5 448L39 452L31.5 456Z" fill="#23c7f0"/>
 <path d="M24 447L31.5 442.5L39 447L31.5 451.5Z" fill="#d10fc6"/>
 <g fill="none" stroke="#fff" stroke-width="1.5">
  <circle cx="73.5" cy="450" r="7.5"/>
  <path d="M73.5 442.5V457.5" stroke-width="1"/>
 </g>
 <g stroke="#fff" stroke-width="0.9"><path d="M74 445.5H77M74 448H78.5M74 450.5H79M74 453H78.5M74 455.5H77"/></g>
 <g stroke="#fff" stroke-width="1.5"><path d="M112 442V457.5M119 442V457.5M107.5 446.5H123.5M107.5 453H123.5"/></g>
</svg>
<div class="a lbl" style="left:31.5px;top:461.5px;color:#f2f5f8;font-size:6.2px;font-weight:normal;transform:translateX(-50%) scaleX(0.95)">Colore</div>
<div class="a lbl" style="left:73.5px;top:461.5px;color:#f2f5f8;font-size:6.2px;font-weight:normal;transform:translateX(-50%) scaleX(0.95)">Ombre</div>
<div class="a lbl" style="left:115.5px;top:461.5px;color:#f2f5f8;font-size:6.2px;font-weight:normal;transform:translateX(-50%) scaleX(0.95)">Griglia</div>


<div class="a card" style="left:718px;top:37px;width:173px;height:186px"></div>
<div class="a" style="left:723px;top:42px;width:163px;height:162px;background:#fff;border-radius:3px"></div>
<svg class="a" style="left:718px;top:37px" width="173" height="186" viewBox="718 37 173 186">
 <g fill="none" stroke-width="2">
  <circle cx="776" cy="66.5" r="10" stroke="#cfcfcf" stroke-width="1.3"/>
  <circle cx="820.5" cy="66.5" r="10" stroke="#cfcfcf" stroke-width="1.3"/>
  <circle cx="776" cy="179" r="10" stroke="#cfcfcf" stroke-width="1.3"/>
  <circle cx="820.5" cy="179" r="10" stroke="#cfcfcf" stroke-width="1.3"/>
 </g>
 <g font-family="Liberation Sans" font-weight="bold" font-size="13" fill="#c4c4c4" text-anchor="middle">
  <text x="778" y="72">5</text><text x="822.5" y="72">7</text>
  <text x="778" y="184.5">6</text><text x="822.5" y="184.5">8</text>
 </g>
 <g stroke="#111" stroke-width="2.2" fill="none">
  <path d="M760.7 100V143M804.7 100V143M760.7 122H849.3V143"/>
 </g>
 <g stroke-width="2.3" fill="#fff">
  <circle cx="760.7" cy="82" r="16.5" stroke="#1f5c78"/>
  <circle cx="804.7" cy="82" r="16.5" stroke="#e8754e"/>
  <circle cx="760.7" cy="163.3" r="16.5" stroke="#d9413f"/>
  <circle cx="804.7" cy="163.3" r="16.5" stroke="#e9bb4e"/>
  <circle cx="848.8" cy="163.3" r="16.5" stroke="#de4a2e"/>
  <circle cx="804.7" cy="122" r="9.5" stroke="#111" fill="#cdcdcd"/>
 </g>
 <g font-family="Liberation Sans" font-weight="bold" font-size="23" fill="#111" stroke="#111" stroke-width="1.2" text-anchor="middle">
  <text x="761" y="90.5">1</text><text x="805" y="90.5">3</text>
  <text x="761" y="171.5">2</text><text x="805" y="171.5">4</text><text x="849" y="171.5">R</text>
  <text x="804.9" y="127.5" font-size="14.5" stroke="#111" stroke-width="0.7">N</text>
 </g>
 <rect x="855.5" y="43.5" width="28.5" height="28.5" rx="4" fill="#6c7880"/>
 <path d="M864.8 54H875.2C875.2 59.5 874 65 871.8 66H868.2C866 65 864.8 59.5 864.8 54Z" fill="none" stroke="#fff" stroke-width="1.5" stroke-linejoin="round"/>
 <path d="M866.5 56.5H873.5M866.8 59.3H873.2M867.5 62H872.5" stroke="#c6cbcf" stroke-width="1.4"/>
 <path d="M870.5 53.5L875 48.5" stroke="#fff" stroke-width="1.5" stroke-linecap="round"/>
</svg>
<div class="a" style="left:759px;top:207px;font-size:9px;font-weight:bold;color:#fff;transform:scaleX(0.88);transform-origin:0 50%">Ridotta</div>
<div class="a" style="left:793px;top:208px;width:19px;height:10px;border-radius:5px;background:#7b868e"></div>
<div class="a" style="left:793px;top:208px;width:10px;height:10px;border-radius:5px;background:#aeb6bc"></div>
<div class="a" style="left:819px;top:207px;font-size:9px;font-weight:bold;color:#fff;transform:scaleX(0.88);transform-origin:0 50%">Normale</div>
<div class="a row" style="top:238px;height:22px"><div class="a tog" style="top:-0.3px;margin-top:6.0px"></div><div class="a rl" style="left:36.5px;top:5.5px">Tutti</div><svg class="a" style="left:129px;top:5.0px" width="36" height="12" viewBox="0 0 36 12"><path d="M2 6C4.6 2.2 10.4 2.2 13 6C10.4 9.8 4.6 9.8 2 6Z" fill="none" stroke="#fff" stroke-width="1.25"/><circle cx="7.5" cy="6" r="1.5" fill="none" stroke="#fff" stroke-width="1"/></svg></div>
<div class="a row" style="top:269.5px;height:26px"><div class="a tog" style="top:-0.3px;margin-top:8.0px"></div><div class="a rl" style="left:36.5px;top:7.5px">Motore</div><svg class="a" style="left:129px;top:7.0px" width="36" height="12" viewBox="0 0 36 12"><path d="M2 6C4.6 2.2 10.4 2.2 13 6C10.4 9.8 4.6 9.8 2 6Z" fill="none" stroke="#fff" stroke-width="1.25"/><circle cx="7.5" cy="6" r="1.5" fill="none" stroke="#fff" stroke-width="1"/><path d="M18.5 4L23.3 8.6L28.1 4" fill="none" stroke="#fff" stroke-width="1.7"/></svg></div>
<div class="a row" style="top:303.5px;height:26px"><div class="a tog" style="top:-0.3px;margin-top:8.0px"></div><div class="a rl" style="left:36.5px;top:7.5px">Frizione</div><svg class="a" style="left:129px;top:7.0px" width="36" height="12" viewBox="0 0 36 12"><path d="M2 6C4.6 2.2 10.4 2.2 13 6C10.4 9.8 4.6 9.8 2 6Z" fill="none" stroke="#fff" stroke-width="1.25"/><circle cx="7.5" cy="6" r="1.5" fill="none" stroke="#fff" stroke-width="1"/><path d="M18.5 4L23.3 8.6L28.1 4" fill="none" stroke="#fff" stroke-width="1.7"/></svg></div>
<div class="a row" style="top:337.5px;height:26px"><div class="a tog" style="top:-0.3px;margin-top:8.0px"></div><div class="a rl" style="left:36.5px;top:7.5px">Cambio</div><svg class="a" style="left:129px;top:7.0px" width="36" height="12" viewBox="0 0 36 12"><path d="M2 6C4.6 2.2 10.4 2.2 13 6C10.4 9.8 4.6 9.8 2 6Z" fill="none" stroke="#fff" stroke-width="1.25"/><circle cx="7.5" cy="6" r="1.5" fill="none" stroke="#fff" stroke-width="1"/><path d="M18.5 4L23.3 8.6L28.1 4" fill="none" stroke="#fff" stroke-width="1.7"/></svg></div>
<div class="a row" style="top:371.5px;height:26px"><div class="a tog" style="top:-0.3px;margin-top:8.0px"></div><div class="a rl" style="left:36.5px;top:7.5px">Albero di trasmissione</div><svg class="a" style="left:129px;top:7.0px" width="36" height="12" viewBox="0 0 36 12"><path d="M2 6C4.6 2.2 10.4 2.2 13 6C10.4 9.8 4.6 9.8 2 6Z" fill="none" stroke="#fff" stroke-width="1.25"/><circle cx="7.5" cy="6" r="1.5" fill="none" stroke="#fff" stroke-width="1"/><path d="M18.5 4L23.3 8.6L28.1 4" fill="none" stroke="#fff" stroke-width="1.7"/></svg></div>
<div class="a row" style="top:405.5px;height:26px"><div class="a tog" style="top:-0.3px;margin-top:8.0px"></div><div class="a rl" style="left:36.5px;top:7.5px">Differenziale</div><svg class="a" style="left:129px;top:7.0px" width="36" height="12" viewBox="0 0 36 12"><path d="M2 6C4.6 2.2 10.4 2.2 13 6C10.4 9.8 4.6 9.8 2 6Z" fill="none" stroke="#fff" stroke-width="1.25"/><circle cx="7.5" cy="6" r="1.5" fill="none" stroke="#fff" stroke-width="1"/><path d="M18.5 4L23.3 8.6L28.1 4" fill="none" stroke="#fff" stroke-width="1.7"/></svg></div>

<div class="a" style="left:0;top:0;width:1px;height:572px;background:#d0d0d0"></div>
<div class="a" style="left:897px;top:20px;width:1px;height:552px;background:#e2e2e6"></div>
<div class="a" style="left:0;top:571px;width:900px;height:1px;background:#d8d8d8"></div>
<div class="a" style="left:898.5px;top:0;width:1.5px;height:572px;background:#dcdcdc"></div>
<div class="a" style="left:896px;top:0;width:4px;height:2px;background:#111;border-bottom-left-radius:3px"></div>
<div class="a" style="left:0;top:569px;width:2px;height:3px;background:#111;border-top-right-radius:2px"></div>
</body></html>
